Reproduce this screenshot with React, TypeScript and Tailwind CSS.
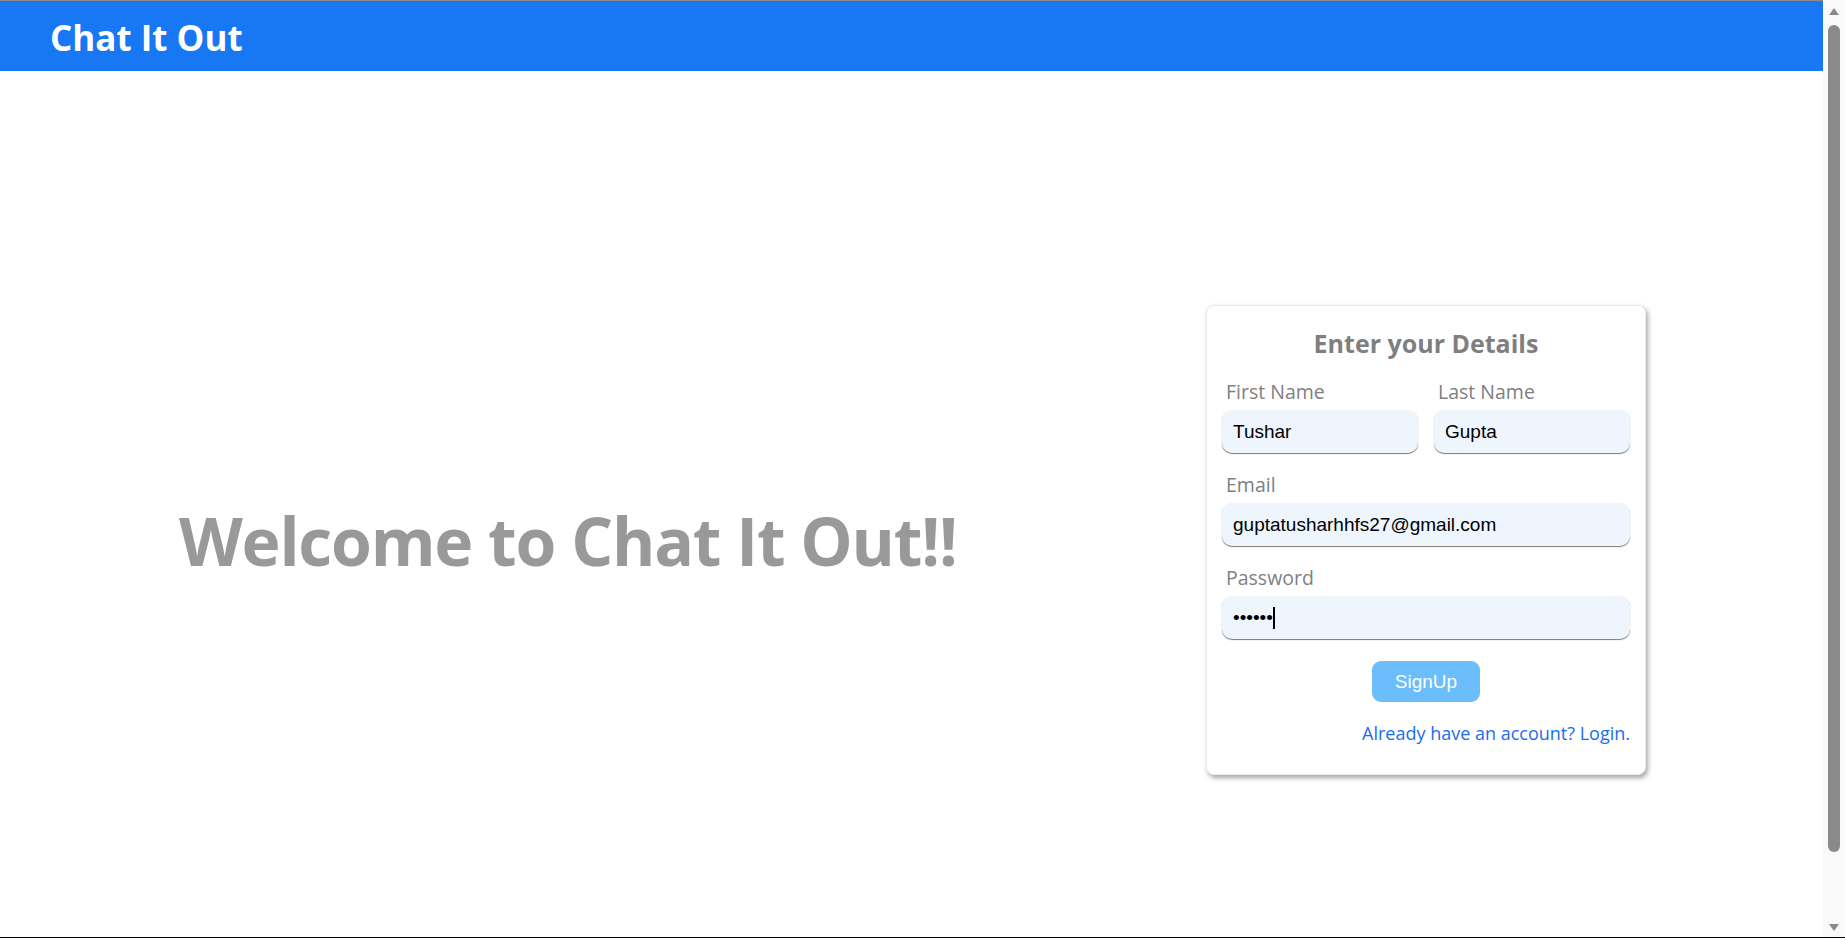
import React from 'react';

const labelCls = "block text-[19.5px] text-[#808080] leading-[26px] mb-[5px] pl-[4px]";
const inputCls =
  "w-full h-[43px] rounded-[10px] bg-[#eef5fc] px-[11px] text-[19px] text-black outline-none shadow-[0_1px_1px_#7a7a7a] font-['Liberation_Sans',Arial,sans-serif]";

const Field: React.FC<{ label: string; value: string; className?: string }> = ({ label, value, className }) => {
  return (
    <div className={className}>
      <label className={labelCls}>{label}</label>
      <input className={inputCls} defaultValue={value} readOnly />
    </div>
  );
};

// fake classic scrollbar as in the screenshot
const ScrollBar: React.FC = () => {
  return (
    <div className="fixed top-0 right-0 h-screen w-[22px] bg-[#f9f9f9] flex flex-col items-center">
      <svg width="12" height="9" viewBox="0 0 12 9" className="mt-[7px]">
        <path d="M6 1 L11 8 L1 8 Z" fill="#8a8a8a" />
      </svg>
      <div className="mt-[9px] w-[12px] h-[827px] rounded-full bg-[#8a8a8a]" />
      <div className="flex-1" />
      <svg width="12" height="9" viewBox="0 0 12 9" className="mb-[6px]">
        <path d="M1 1 L11 1 L6 8 Z" fill="#8a8a8a" />
      </svg>
    </div>
  );
};

const App: React.FC = () => {
  return (
    <div className="font-['Open_Sans',sans-serif] bg-white pr-[22px]">
      <header className="h-[71px] border-t border-[#8c8c8c] bg-[#1877f2] flex items-center pl-[50px] pt-[3px]">
        <h1 className="text-[35px] font-bold text-white leading-none">Chat It Out</h1>
      </header>

      <main className="h-screen flex items-center justify-between pl-[179px] pr-[177px]">
        <h2 className="text-[66px] font-bold text-[#999999] tracking-[-1.2px]">Welcome to Chat It Out!!</h2>

        <div className="w-[440px] rounded-[8px] bg-white border border-[#ececec] shadow-[2px_3px_5px_rgba(0,0,0,0.35)] px-[15px] pt-[19px] pb-[29px]">
          <h3 className="text-center text-[25px] font-bold text-[#7f7f7f] mb-[17px]">Enter your Details</h3>

          <div className="flex gap-[16px] mb-[19px]">
            <Field label="First Name" value="Tushar" className="flex-1" />
            <Field label="Last Name" value="Gupta" className="flex-1" />
          </div>

          <Field label="Email" value="guptatusharhhfs27@gmail.com" className="mb-[19px]" />

          <div>
            <label className={labelCls}>Password</label>
            <div className="h-[43px] rounded-[10px] bg-[#eef5fc] px-[11px] shadow-[0_1px_1px_#7a7a7a] flex items-center font-['Liberation_Sans',Arial,sans-serif] text-[19px] text-black">
              <span>••••••</span>
              <span className="w-[2px] h-[22px] bg-black" />
            </div>
          </div>

          <div className="flex justify-center mt-[22px]">
            <button className="w-[108px] h-[41px] rounded-[9px] bg-[#6bbdfc] text-white text-[19px] font-['Liberation_Sans',Arial,sans-serif]">
              SignUp
            </button>
          </div>

          <div className="flex justify-end mt-[19px]">
            <a className="text-[18px] text-[#1a6cf0] leading-[24px] cursor-pointer">Already have an account? Login.</a>
          </div>
        </div>
      </main>
      <ScrollBar />
      <div className="fixed left-0 right-0 bottom-0 h-[1px] bg-black" />
    </div>
  );
};

export default App;
